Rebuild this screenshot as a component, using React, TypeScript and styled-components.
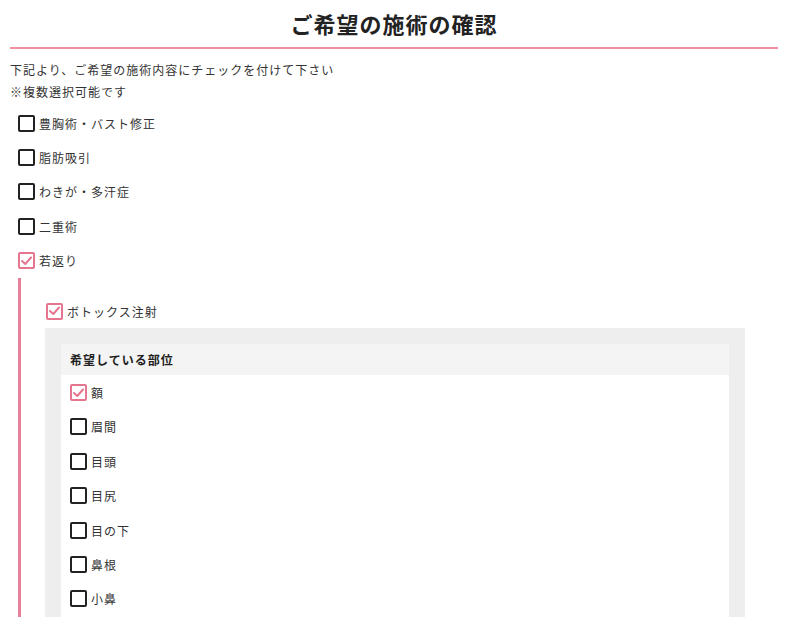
import React from "react";
import styled, { createGlobalStyle } from "styled-components";

const Global = createGlobalStyle`
  html, body { margin: 0; padding: 0; background: #fff; overflow: hidden; }
  body { font-family: "Noto Sans CJK JP", "Noto Sans", sans-serif; color: #333; }
`;

const Page = styled.div`
  width: 768px;
  margin-left: 10px;
`;

const Title = styled.h1`
  margin: 0;
  height: 47px;
  line-height: 47px;
  text-align: center;
  font-size: 22px;
  font-weight: 700;
  letter-spacing: 1px;
  color: #222;
  border-bottom: 2px solid #ec8fa0;
`;

const Lead = styled.p`
  margin: 0;
  font-size: 12px;
  line-height: 22px;
  letter-spacing: 1px;
  color: #333;
`;

const LeadBlock = styled.div`
  padding-top: 10px;
  padding-bottom: 3px;
`;

const List = styled.div<{ $indent: number }>`
  display: flex;
  flex-direction: column;
  padding-left: ${(p) => p.$indent}px;
`;

const Row = styled.label`
  display: flex;
  align-items: center;
  gap: 4px;
  height: 34.4px;
  font-size: 12px;
  letter-spacing: 1px;
  color: #333;
`;

const Box = styled.span<{ $checked: boolean }>`
  box-sizing: border-box;
  width: 17px;
  height: 17px;
  border-radius: 2px;
  border: 2px solid ${(p) => (p.$checked ? "#e6758f" : "#222")};
  background: #fff;
  display: flex;
  align-items: center;
  justify-content: center;
  flex: none;
`;

const Sub = styled.div`
  border-left: 3px solid #e77f98;
  margin-left: 8px;
  padding: 16px 33px 0 24px;
`;

const Panel = styled.div`
  background: #eee;
  padding: 16px;
`;

const Inner = styled.div`
  background: #fff;
  padding-bottom: 16px;
`;

const InnerHead = styled.div`
  background: #f4f4f4;
  height: 31px;
  line-height: 31px;
  padding-left: 9px;
  font-size: 12px;
  font-weight: 700;
  letter-spacing: 1px;
  color: #222;
`;

const Check = () => (
  <svg width="11" height="10" viewBox="0 0 11 10">
    <path d="M1 5 L4.3 8 L10 1.5" fill="none" stroke="#e6758f" strokeWidth="2" strokeLinecap="round" strokeLinejoin="round" />
  </svg>
);

const Item = ({ label, checked = false }: { label: string; checked?: boolean }) => (
  <Row>
    <Box $checked={checked}>{checked && <Check />}</Box>
    <span>{label}</span>
  </Row>
);

const top = ["豊胸術・バスト修正", "脂肪吸引", "わきが・多汗症", "二重術"];
const parts = ["眉間", "目頭", "目尻", "目の下", "鼻根", "小鼻"];

export default function App() {
  return (
    <>
      <Global />
      <Page>
        <Title>ご希望の施術の確認</Title>
        <LeadBlock>
          <Lead>下記より、ご希望の施術内容にチェックを付けて下さい</Lead>
          <Lead>※複数選択可能です</Lead>
        </LeadBlock>
        <List $indent={8}>
          {top.map((t) => (
            <Item key={t} label={t} />
          ))}
          <Item label="若返り" checked />
        </List>
        <Sub>
          <List $indent={1}>
            <Item label="ボトックス注射" checked />
          </List>
          <Panel>
            <Inner>
              <InnerHead>希望している部位</InnerHead>
              <List $indent={9}>
                <Item label="額" checked />
                {parts.map((t) => (
                  <Item key={t} label={t} />
                ))}
              </List>
            </Inner>
          </Panel>
        </Sub>
      </Page>
    </>
  );
}
